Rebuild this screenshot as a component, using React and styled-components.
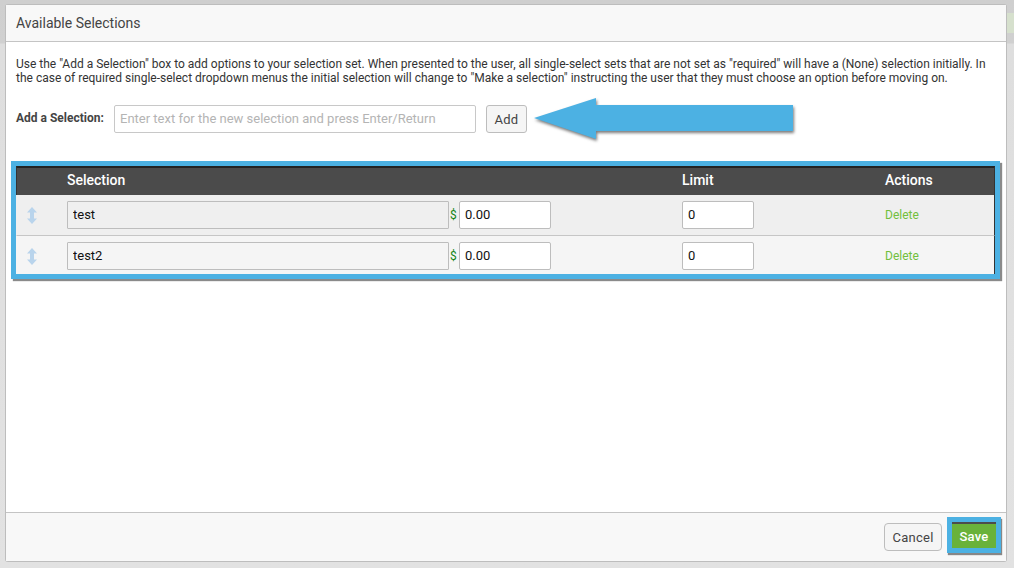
import React from "react";
import styled, { createGlobalStyle } from "styled-components";

const Global = createGlobalStyle`
  html, body { margin: 0; padding: 0; height: 100%; background: #d2d2d2; }
  body { font-family: Roboto, "Liberation Sans", sans-serif; overflow: hidden; }
  * { box-sizing: border-box; }
`;

const Backdrop = styled.div`
  width: 1014px;
  height: 568px;
  padding: 5px 8px 7px 6px;
  background:
    linear-gradient(#d6e0cd, #d6e0cd) right 13px / 8px 20px no-repeat,
    linear-gradient(180deg, #cfcfcf 0, #d0d0d0 43px, #dedede 44px, #e2e2e2 100%);
`;

const Modal = styled.div`
  position: relative;
  width: 1000px;
  height: 556px;
  display: flex;
  flex-direction: column;
  background: #fff;
  border-radius: 2px;
  box-shadow: 0 0 0 1px #bdbdbd;
`;

const Header = styled.div`
  height: 37px;
  flex: none;
  display: flex;
  align-items: center;
  padding: 0 10px;
  background: #f8f8f8;
  border-bottom: 1px solid #c4c4c4;
  color: #444;
  font-size: 14px;
`;

const Body = styled.div`
  flex: 1;
  padding: 15px 5px 0 6px;
  min-height: 0;
`;

const Intro = styled.p`
  margin: 0 0 0 4px;
  width: 980px;
  font-size: 12px;
  line-height: 14px;
  color: #333;
`;

const AddRow = styled.div`
  margin: 20px 0 0 4px;
  display: flex;
  align-items: flex-start;
  height: 28px;
`;

const AddLabel = styled.label`
  width: 98px;
  padding-top: 6px;
  font-size: 12px;
  font-weight: 700;
  color: #444;
`;

const AddInput = styled.input`
  width: 362px;
  height: 28px;
  padding: 0 5px 2px;
  border: 1px solid #c8c8c8;
  border-radius: 2px;
  background: #fff;
  font: 13px Roboto, sans-serif;
  &::placeholder { color: #b4b4b4; opacity: 1; }
`;

const Button = styled.button`
  height: 28px;
  padding: 0;
  border: 1px solid #bdbdbd;
  border-radius: 3px;
  background: #f5f5f5;
  color: #444;
  font: 13px Roboto, sans-serif;
  letter-spacing: 0.02em;
`;

const AddButton = styled(Button)`
  width: 41px;
  margin-left: 10px;
`;

const Arrow = styled.svg`
  position: absolute;
  left: 519px;
  top: 83px;
  overflow: visible;
  filter: drop-shadow(1px 2px 1.5px rgba(50, 50, 50, 0.65));
`;

const Highlight = styled.div`
  margin: 28px 0 0 -1px;
  width: 989px;
  border: 5px solid #4cb1e3;
  box-shadow: 2px 2px 1px rgba(60, 60, 60, 0.6);
`;

const grid = `
  display: grid;
  grid-template-columns: 50px 615px 203px 1fr;
  align-items: center;
`;

const HeadRow = styled.div`
  ${grid}
  height: 29px;
  padding-bottom: 3px;
  background: #4b4b4b;
  border-top: 2px solid #232323;
  border-left: 1px solid #333;
  border-right: 1px solid #333;
  color: #fff;
  font-size: 14px;
  font-weight: 500;
`;

const Row = styled.div`
  ${grid}
  height: ${(p) => p.$h}px;
  padding-top: ${(p) => (p.$line ? 0 : 2)}px;
  background: ${(p) => p.$bg};
  border-bottom: ${(p) => (p.$line ? "1px solid #c6c6c6" : "none")};
  border-left: 1px solid ${(p) => p.$bg};
  border-right: 1px solid #333;
`;

const Cell = styled.div`
  display: flex;
  align-items: center;
`;

const Handle = styled(Cell)`
  padding-left: 9px;
`;

const NameInput = styled.input`
  width: 382px;
  height: 28px;
  padding: 0 5px 2px;
  border: 1px solid #bdbdbd;
  border-radius: 1px;
  background: ${(p) => p.$bg};
  color: #111;
  font: 13px Roboto, sans-serif;
`;

const Dollar = styled.span`
  width: 9px;
  margin-left: 1px;
  color: #128412;
  font-size: 12px;
`;

const NumInput = styled.input`
  width: ${(p) => p.$w}px;
  height: 28px;
  padding: 0 5px 2px;
  border: 1px solid #bdbdbd;
  border-radius: 2px;
  background: #fff;
  color: #111;
  font: 13px Roboto, sans-serif;
`;

const DeleteLink = styled.a`
  color: #72bf3c;
  font-size: 12px;
`;

const Footer = styled.div`
  height: 49px;
  flex: none;
  display: flex;
  align-items: flex-start;
  justify-content: flex-end;
  gap: 5px;
  padding: 4px 5px 0 0;
  background: #f8f8f8;
  border-top: 1px solid #c4c4c4;
`;

const CancelButton = styled(Button)`
  width: 58px;
  margin-top: 6px;
  border-radius: 4px;
`;

const SaveFrame = styled.div`
  width: 54px;
  height: 36px;
  border: 5px solid #4cb1e3;
  box-shadow: 1px 2px 1px rgba(60, 60, 60, 0.6);
`;

const SaveButton = styled.button`
  width: 100%;
  height: 100%;
  padding: 0;
  border: 0;
  border-top: 2px solid #4c4c4c;
  background: #69b23a;
  color: #fff;
  font: 500 13px Roboto, sans-serif;
  letter-spacing: 0.02em;
`;

const DragIcon = () => (
  <svg width="12" height="17" viewBox="0 0 12 17">
    <path d="M6 0 L11 5.5 H8 V11.5 H11 L6 17 L1 11.5 H4 V5.5 H1 Z" fill="#b9d4ec" />
  </svg>
);

const rows = [
  { name: "test", bg: "#efefef", h: 41, line: true },
  { name: "test2", bg: "#f5f5f5", h: 38, line: false },
];

export default function App() {
  return (
    <Backdrop>
      <Global />
      <Modal>
        <Header>Available Selections</Header>
        <Body>
          <Intro>
            Use the "Add a Selection" box to add options to your selection set. When presented to the user, all single-select sets that are not set as "required" will have a (None) selection initially. In the case of required single-select dropdown menus the initial selection will change to "Make a selection" instructing the user that they must choose an option before moving on.
          </Intro>
          <AddRow>
            <AddLabel>Add a Selection:</AddLabel>
            <AddInput placeholder="Enter text for the new selection and press Enter/Return" />
            <AddButton>Add</AddButton>
          </AddRow>
          <Highlight>
            <HeadRow>
              <span />
              <span>Selection</span>
              <span>Limit</span>
              <span>Actions</span>
            </HeadRow>
            {rows.map((r) => (
              <Row key={r.name} $bg={r.bg} $h={r.h} $line={r.line}>
                <Handle><DragIcon /></Handle>
                <Cell>
                  <NameInput $bg={r.bg} defaultValue={r.name} />
                  <Dollar>$</Dollar>
                  <NumInput $w={92} defaultValue="0.00" />
                </Cell>
                <Cell><NumInput $w={72} defaultValue="0" /></Cell>
                <Cell><DeleteLink>Delete</DeleteLink></Cell>
              </Row>
            ))}
          </Highlight>
        </Body>
        <Footer>
          <CancelButton>Cancel</CancelButton>
          <SaveFrame><SaveButton>Save</SaveButton></SaveFrame>
        </Footer>
        <Arrow width="270" height="50" viewBox="0 0 270 50">
          <path d="M9 30 L71 10 V17 H268 V43 H71 V51 Z" fill="#4cb1e3" />
        </Arrow>
      </Modal>
    </Backdrop>
  );
}
